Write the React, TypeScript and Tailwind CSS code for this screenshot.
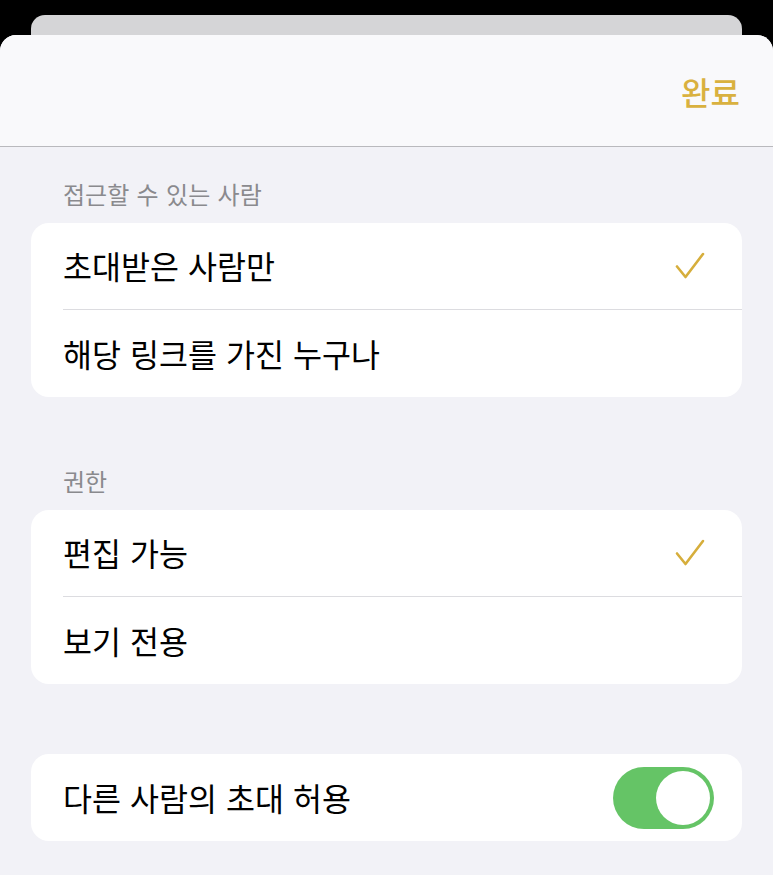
const FONT = "font-['Noto_Sans_CJK_KR','Noto_Sans',sans-serif]"

function Check() {
  return (
    <svg width="32" height="30" viewBox="0 0 32 30" fill="none">
      <path
        d="M3 15.5 L11.5 26 L29 3"
        stroke="#d6ae3c"
        strokeWidth="2.6"
        strokeLinecap="round"
        strokeLinejoin="round"
      />
    </svg>
  )
}

type Row = { label: string; checked?: boolean }

function Group({ title, rows }: { title: string; rows: Row[] }) {
  return (
    <section>
      <h2 className="h-[76px] px-[63px] pt-[29px] text-[24px] leading-[36px] text-[#8a8a8e] [word-spacing:2px]">
        {title}
      </h2>
      <div className="mx-[31px] overflow-hidden rounded-[18px] bg-white">
        {rows.map((row, i) => (
          <div key={row.label} className="pl-[32px]">
            <div
              className={`flex h-[87px] items-center justify-between pr-[36px] ${
                i < rows.length - 1 ? 'border-b border-[#dcdce0]' : ''
              }`}
            >
              <span className="text-[31.5px] text-black [word-spacing:2px]">{row.label}</span>
              {row.checked && <Check />}
            </div>
          </div>
        ))}
      </div>
    </section>
  )
}

export default function App() {
  return (
    <div className={`h-[875px] w-[773px] overflow-hidden bg-black ${FONT}`}>
      <div className="mx-[31px] mt-[15px] h-[30px] rounded-t-[14px] bg-[#d5d5d7]" />
      <div className="-mt-[10px] h-[900px] overflow-hidden rounded-t-[16px] bg-[#f2f2f7]">
        <header className="flex h-[112px] items-center justify-end border-b border-[#b9b9bd] bg-[#f9f9fb] pr-[33px]">
          <button className="text-[32px] font-medium text-[#d9b13f]">완료</button>
        </header>
        <Group
          title="접근할 수 있는 사람"
          rows={[{ label: '초대받은 사람만', checked: true }, { label: '해당 링크를 가진 누구나' }]}
        />
        <div className="h-[37px]" />
        <Group title="권한" rows={[{ label: '편집 가능', checked: true }, { label: '보기 전용' }]} />
        <div className="mx-[31px] mt-[70px] flex h-[87px] items-center justify-between rounded-[18px] bg-white pl-[32px] pr-[28px]">
          <span className="text-[31.5px] text-black [word-spacing:2px]">다른 사람의 초대 허용</span>
          <div className="flex h-[62px] w-[101px] shrink-0 items-center justify-end rounded-full bg-[#65c466] p-[4px]">
            <div className="h-[54px] w-[54px] rounded-full bg-white" />
          </div>
        </div>
      </div>
    </div>
  )
}
